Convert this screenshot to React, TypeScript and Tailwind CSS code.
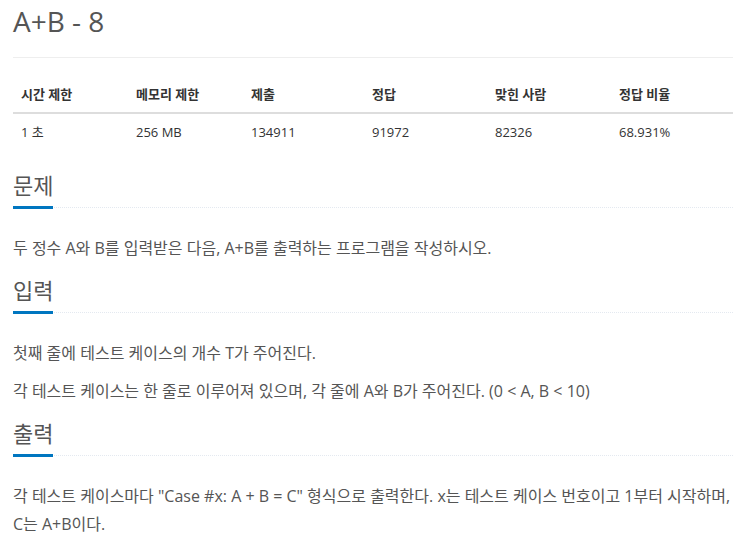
const font = { fontFamily: '"Open Sans", "Noto Sans CJK KR", sans-serif' };

const stats = [
  { label: "시간 제한", value: "1 초" },
  { label: "메모리 제한", value: "256 MB" },
  { label: "제출", value: "134911" },
  { label: "정답", value: "91972" },
  { label: "맞힌 사람", value: "82326" },
  { label: "정답 비율", value: "68.931%" },
];

const Headline = ({ title }: { title: string }) => (
  <div className="flex border-b border-dotted border-[#e4e9f0] mt-[15px] mb-[26px]">
    <h2 className="inline-block text-[22px] leading-[26px] text-[#555] border-b-[3px] border-[#0076c0] pb-[8px] -mb-[2px]">
      {title}
    </h2>
  </div>
);

const Para = ({ children }: { children: React.ReactNode }) => (
  <p className="text-[16px] leading-[28px] text-[#555] mb-[10px]">{children}</p>
);

export default function App() {
  return (
    <div className="w-[744px] min-h-[546px] bg-white pl-[13px] pr-[11px] pt-[3px]" style={font}>
      <div className="border-b border-[#eee] pb-[18px]">
        <h1 className="text-[28px] leading-[36px] text-[#555]">A+B - 8</h1>
      </div>

      <div className="mt-[18px] mb-[22px] text-[13px] text-[#333]">
        <div className="grid grid-cols-[115px_115px_121px_123px_124px_122px] border-b-2 border-[#ddd]">
          {stats.map((s) => (
            <div key={s.label} className="px-2 py-2 leading-[20px] font-bold">
              {s.label}
            </div>
          ))}
        </div>
        <div className="grid grid-cols-[115px_115px_121px_123px_124px_122px]">
          {stats.map((s) => (
            <div key={s.label} className="px-2 py-2 leading-[20px]">
              {s.value}
            </div>
          ))}
        </div>
      </div>

      <Headline title="문제" />
      <Para>두 정수 A와 B를 입력받은 다음, A+B를 출력하는 프로그램을 작성하시오.</Para>

      <Headline title="입력" />
      <Para>첫째 줄에 테스트 케이스의 개수 T가 주어진다.</Para>
      <Para>각 테스트 케이스는 한 줄로 이루어져 있으며, 각 줄에 A와 B가 주어진다. (0 &lt; A, B &lt; 10)</Para>

      <Headline title="출력" />
      <Para>
        각 테스트 케이스마다 "Case #x: A + B = C" 형식으로 출력한다. x는 테스트 케이스 번호이고 1부터 시작하며, C는 A+B이다.
      </Para>
    </div>
  );
}
